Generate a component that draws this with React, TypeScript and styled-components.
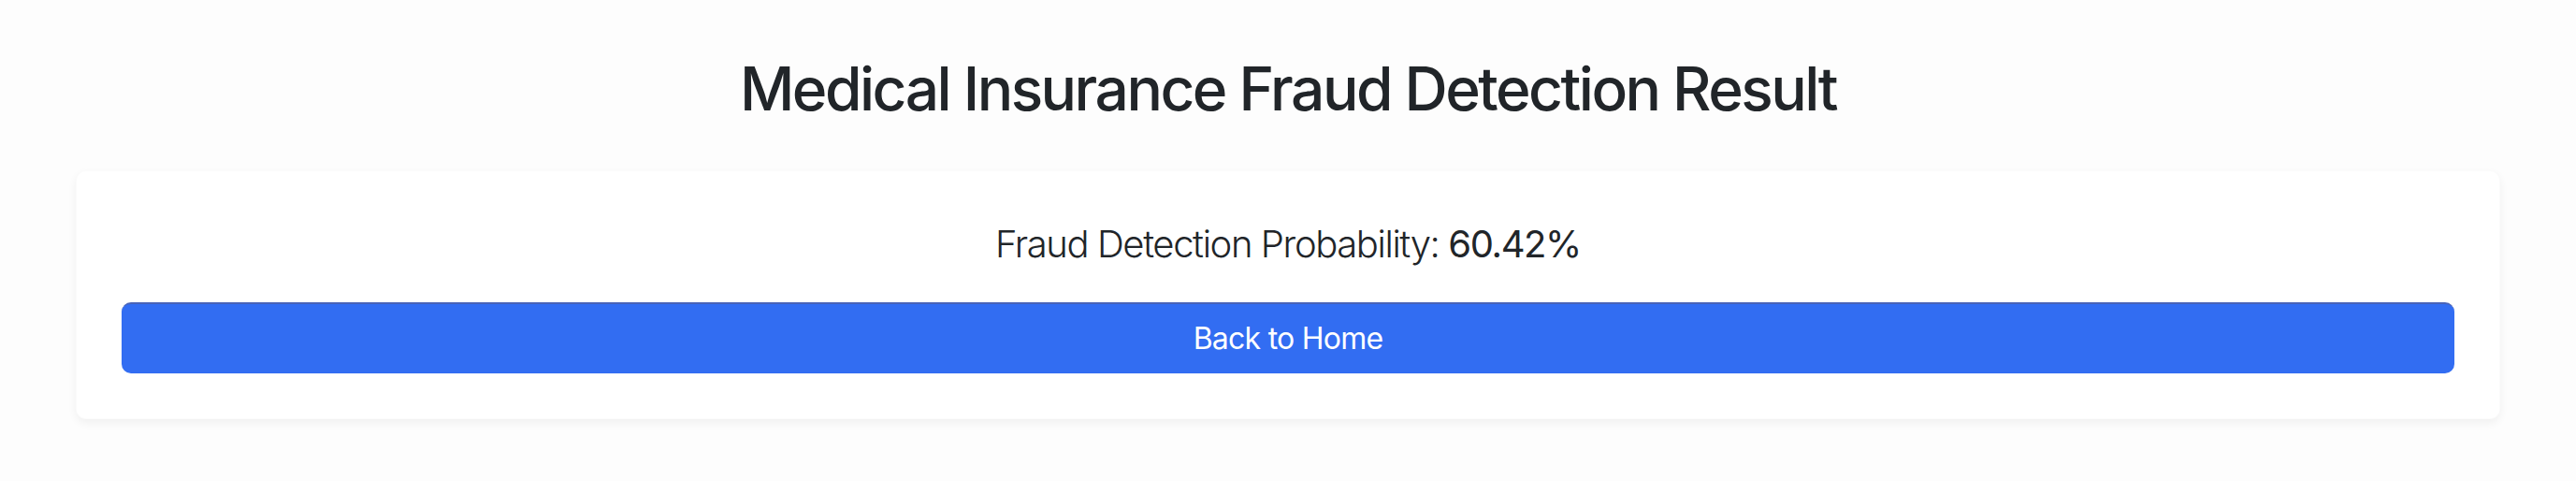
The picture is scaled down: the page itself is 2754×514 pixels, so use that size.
import React from "react";
import styled, { createGlobalStyle } from "styled-components";

const GlobalStyle = createGlobalStyle`
  html, body {
    margin: 0;
    padding: 0;
    background: #fdfdfd;
  }
  body {
    font-family: Inter, "Noto Sans", "Liberation Sans", sans-serif;
    color: #212529;
  }
`;

const Page = styled.main`
  padding: 57px 81px 40px;
  box-sizing: border-box;
`;

const Title = styled.h2`
  margin: 0 0 48px;
  font-size: 64px;
  font-weight: 500;
  line-height: 1.2;
  text-align: center;
  color: #212529;
  letter-spacing: -2.5px;
`;

const Card = styled.section`
  background: #ffffff;
  border: 1px solid rgba(0, 0, 0, 0.015);
  border-radius: 11px;
  box-shadow: 0 4px 10px rgba(0, 0, 0, 0.055);
  padding: 48px;
  display: flex;
  flex-direction: column;
`;

const Result = styled.p`
  margin: 0 0 32px;
  font-size: 40px;
  line-height: 1.5;
  text-align: center;
  font-weight: 300;
  letter-spacing: -1.4px;
  color: #212529;
`;

const Value = styled.strong`
  font-weight: 400;
`;

const HomeButton = styled.button`
  height: 76px;
  width: 100%;
  box-sizing: border-box;
  border: none;
  border-top: 2px solid #4863b8;
  border-radius: 10px;
  background: #326df2;
  color: #ffffff;
  font-family: inherit;
  font-size: 32px;
  font-weight: 400;
  line-height: 1.5;
  letter-spacing: -0.75px;
  cursor: pointer;
`;

export default function App() {
  return (
    <>
      <GlobalStyle />
      <Page>
        <Title>Medical Insurance Fraud Detection Result</Title>
        <Card>
          <Result>
            Fraud Detection Probability: <Value>60.42%</Value>
          </Result>
          <HomeButton>Back to Home</HomeButton>
        </Card>
      </Page>
    </>
  );
}
